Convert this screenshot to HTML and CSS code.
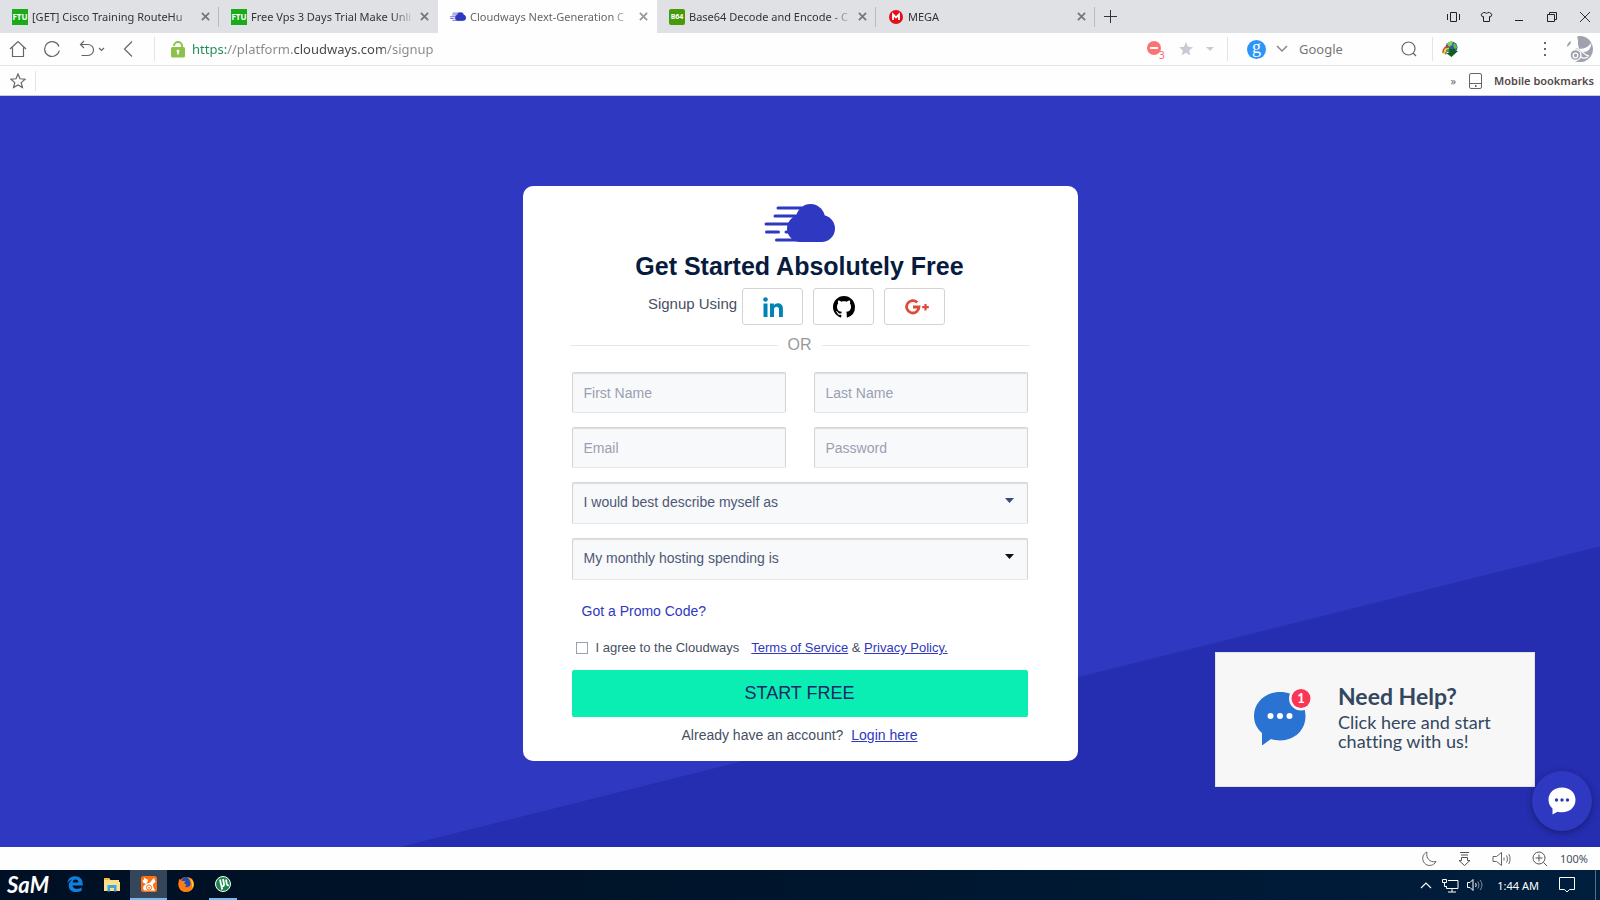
FILE: index.html
```html
<!DOCTYPE html>
<html lang="en">
<head>
    <meta charset="UTF-8">
    <meta name="viewport" content="width=device-width, initial-scale=1.0">
    <title>Cloudways Next-Generation Cloud</title>
    <link rel="stylesheet" href="styles.css">
</head>
<body>

    <svg width="0" height="0" class="defs" aria-hidden="true">
        <symbol id="cloud" viewBox="0 0 71 38">
            <g stroke="currentColor" stroke-width="3" stroke-linecap="round">
                <path d="M14 4h24M11 12h22M2 20h26M2.500 28h12M22 28h8M12.500 36h26"/>
            </g>
            <g fill="currentColor">
                <circle cx="46.500" cy="14.500" r="14.500"/>
                <circle cx="57.500" cy="24.500" r="13.500"/>
                <circle cx="36.500" cy="24.500" r="13.500"/>
                <path d="M36 20h22v18H36z"/>
            </g>
        </symbol>
        <symbol id="close" viewBox="0 0 10 10">
            <path d="M1 1l8 8M9 1l-8 8" stroke="currentColor" stroke-width="2"/>
        </symbol>
        <symbol id="down" viewBox="0 0 12 8">
            <path d="M1 1l5 5 5-5" fill="none" stroke="currentColor" stroke-width="1.500"/>
        </symbol>
    </svg>

    <header class="browser">
        <div class="tabs">
            <div class="tab">
                <span class="favicon ftu">FTU</span>
                <a href="#" class="tab-title">[GET] Cisco Training RouteHu</a>
                <button class="tab-close" aria-label="Close tab"><svg width="9" height="9"><use href="#close"/></svg></button>
            </div>
            <div class="tab">
                <span class="favicon ftu">FTU</span>
                <a href="#" class="tab-title">Free Vps 3 Days Trial Make Unli</a>
                <button class="tab-close" aria-label="Close tab"><svg width="9" height="9"><use href="#close"/></svg></button>
            </div>
            <div class="tab active">
                <svg class="favicon blue" width="16" height="9"><use href="#cloud"/></svg>
                <a href="#" class="tab-title">Cloudways Next-Generation C</a>
                <button class="tab-close" aria-label="Close tab"><svg width="9" height="9"><use href="#close"/></svg></button>
            </div>
            <div class="tab">
                <span class="favicon b64">B64</span>
                <a href="#" class="tab-title">Base64 Decode and Encode - C</a>
                <button class="tab-close" aria-label="Close tab"><svg width="9" height="9"><use href="#close"/></svg></button>
            </div>
            <div class="tab">
                <svg class="favicon" width="16" height="16" viewBox="0 0 16 16"><circle cx="8" cy="8" r="7" fill="#e80c18"/><path d="M5 11V5.500l3 3 3-3V11" fill="none" stroke="#fff" stroke-width="1.800"/></svg>
                <a href="#" class="tab-title">MEGA</a>
                <button class="tab-close" aria-label="Close tab"><svg width="9" height="9"><use href="#close"/></svg></button>
            </div>
            <button class="new-tab" aria-label="New tab"><svg width="13" height="13" viewBox="0 0 13 13"><path d="M6.500 0v13M0 6.500h13" stroke="#333"/></svg></button>
            <div class="window-controls">
                <button aria-label="Side panels"><svg width="13" height="12" viewBox="0 0 13 12"><path d="M.5 3v6M12.500 3v6M3.500 1.500h6v9h-6z" fill="none" stroke="#222"/></svg></button>
                <button aria-label="Themes"><svg width="13" height="12" viewBox="0 0 13 12"><path d="M3.500 1.500h1.500c1 1 2 1 3 0h1.500l2.500 2-1.500 2.500-1-.5v5h-6v-5l-1 .5L1 3.500z" fill="none" stroke="#222"/></svg></button>
                <button aria-label="Minimize"><svg width="12" height="12" viewBox="0 0 12 12"><path d="M2 9.500h8" stroke="#222"/></svg></button>
                <button aria-label="Restore"><svg width="12" height="12" viewBox="0 0 12 12"><path d="M1.500 3.500h7v7h-7zM3.500 3V1.500h7v7H9" fill="none" stroke="#222"/></svg></button>
                <button aria-label="Close window"><svg width="12" height="12" viewBox="0 0 12 12"><path d="M1 1l10 10M11 1L1 11" stroke="#333"/></svg></button>
            </div>
        </div>

        <div class="toolbar">
            <div class="nav">
                <button aria-label="Home"><svg width="18" height="18" viewBox="0 0 18 18"><path d="M1 9l8-7.500L17 9M3.500 7.500v9h11v-9" fill="none" stroke="#666" stroke-width="1.200"/></svg></button>
                <button aria-label="Reload"><svg width="18" height="18" viewBox="0 0 18 18"><path d="M16 6.500a7.400 7.400 0 1 0 .3 4" fill="none" stroke="#666" stroke-width="1.200"/></svg></button>
                <button class="undo" aria-label="Restore closed tab"><svg width="26" height="18" viewBox="0 0 26 18"><path d="M5 1L1.500 4.500 5 8M1.500 4.500H9a5.500 5.500 0 0 1 0 11H2.500" fill="none" stroke="#666" stroke-width="1.200"/><path d="M20 8l2.500 2.500L25 8" fill="none" stroke="#666" stroke-width="1.200"/></svg></button>
                <button aria-label="Back"><svg width="18" height="18" viewBox="0 0 18 18"><path d="M13 1.500L5.500 9l7.500 7.500" fill="none" stroke="#666" stroke-width="1.200"/></svg></button>
            </div>
            <div class="address">
                <svg width="14" height="17" viewBox="0 0 14 17"><path d="M3 5a4 4 0 0 1 8 0v2" fill="none" stroke="#8bc34a" stroke-width="2"/><rect y="6" width="14" height="10.500" rx="1.500" fill="#8bc34a"/><path d="M7 9.500v4" stroke="#fff" stroke-width="1.600"/><circle cx="7" cy="10" r="1.500" fill="#fff"/></svg>
                <input class="url" type="text" aria-label="Address" value="https://platform.cloudways.com/signup">
                <button aria-label="Blocked ads"><svg width="20" height="20" viewBox="0 0 20 20"><circle cx="8" cy="9" r="7" fill="#fb7373"/><path d="M4 9h8" stroke="#fff" stroke-width="2"/><text x="13" y="20" font-size="10" fill="#fb6a6a">3</text></svg></button>
                <button aria-label="Bookmark page"><svg width="14" height="14" viewBox="0 0 14 14"><path d="M7 0l2 4.800 5 .4-3.800 3.300L11.400 13.500 7 10.800 2.600 13.500l1.200-5L0 5.200l5-.4z" fill="#c8cad6"/></svg></button>
                <button aria-label="Bookmark options"><svg width="8" height="4" viewBox="0 0 8 4"><path d="M0 0h8L4 4z" fill="#c8cad6"/></svg></button>
            </div>
            <div class="search">
                <span class="engine">g</span>
                <svg class="grey" width="12" height="8"><use href="#down"/></svg>
                <input type="text" placeholder="Google" aria-label="Search">
                <button aria-label="Search"><svg width="16" height="16" viewBox="0 0 16 16"><circle cx="7.500" cy="7.500" r="6.500" fill="none" stroke="#666" stroke-width="1.200"/><path d="M12 12l3 3" stroke="#666" stroke-width="1.200"/></svg></button>
            </div>
            <div class="extras">
                <svg width="16" height="16" viewBox="0 0 16 16"><circle cx="9.500" cy="6.500" r="6" fill="#1e62a8"/><path d="M5 3c1-2 4-3 6-2l-1 3-3 2z" fill="#8ccf48"/><path d="M12 2c2 1 3 3 3 5l-2 1-2-3z" fill="#6fb83b"/><path d="M1 12C1 7 4 5 7 6" fill="none" stroke="#e33b20" stroke-width="1.500"/><path d="M2 13c0-4 3-6 5-5.500" fill="none" stroke="#f6cf2c" stroke-width="1.500"/><path d="M3.500 13.500c0-3 2-4 4-4" fill="none" stroke="#51a832" stroke-width="1.500"/><path d="M7 8l6 0 0 2h3l-6.500 6L4 12h4z" fill="#135c1c"/></svg>
                <button class="menu" aria-label="Menu"><svg width="4" height="16" viewBox="0 0 4 16"><path d="M1 1h2v2H1zM1 7h2v2H1zM1 13h2v2H1z" fill="#666"/></svg></button>
                <svg class="profile" width="26" height="26" viewBox="0 0 26 26">
                    <path d="M10 .5C18-2 26 5 26 13a13 13 0 0 1-23 8.500C3 15 7 13 12 11.500 10 8 12 5 10 .5zM0 11C0 8 1.500 6 4 5c0 2.500-1 4-4 6z" fill="#9fa2ae"/>
                    <path d="M10 12.500C15 13 20 13 24.500 6.500 24 13 21 16 16.500 16zM8 4c1 4 3 5 4 9l-3-1c1-3-1-4-1-8z" fill="#fefefe"/>
                    <circle cx="8.500" cy="19" r="5.500" fill="#9fa2ae" stroke="#fefefe" stroke-width="1.300"/>
                    <circle cx="8.500" cy="19.500" r="2.300" fill="none" stroke="#fefefe" stroke-width="1.300"/>
                    <path d="M13 14.500c4 1.500 4 5 9 5.500M14 21c2 2 5 1 7 0" fill="none" stroke="#fefefe" stroke-width="1.300"/>
                </svg>
            </div>
        </div>

        <div class="bookmarks">
            <button class="add" aria-label="Add bookmark"><svg width="16" height="16" viewBox="0 0 16 16"><path d="M8 1l2 4.800 5.200.4-4 3.400 1.200 5L8 12l-4.400 2.600 1.200-5-4-3.400L6 5.800z" fill="none" stroke="#666" stroke-width="1.200"/></svg></button>
            <span class="more">»</span>
            <svg width="13" height="16" viewBox="0 0 13 16"><rect x=".5" y=".5" width="12" height="15" rx="1.500" fill="none" stroke="#666"/><path d="M1 10.500h11" stroke="#666"/><path d="M6 12h1.500v2H6z" fill="#666"/></svg>
            <a href="#">Mobile bookmarks</a>
        </div>
    </header>

    <main class="page">
        <form class="card" onsubmit="return false;">
            <svg class="logo" width="71" height="38"><use href="#cloud"/></svg>
            <h1>Get Started Absolutely Free</h1>

            <div class="social">
                <span>Signup Using</span>
                <button type="button" aria-label="LinkedIn"><svg width="20" height="20" viewBox="0 0 20 20" fill="#0084b8"><circle cx="2.500" cy="2.500" r="2.300"/><path d="M.5 6.500h4V20h-4zM7 6.500h3.900v1.900c1.800-3.300 9-3 9 3V20H16v-7.500c0-3.800-5-3.500-5 0V20H7z"/></svg></button>
                <button type="button" aria-label="GitHub"><svg width="22" height="22" viewBox="0 0 16 16"><path d="M8 0C3.580 0 0 3.580 0 8c0 3.540 2.290 6.530 5.470 7.590.4.070.55-.17.55-.38 0-.19-.01-.82-.01-1.490-2.010.37-2.530-.49-2.690-.94-.09-.23-.48-.94-.82-1.130-.28-.15-.68-.52-.01-.53.63-.01 1.080.58 1.230.82.72 1.210 1.870.87 2.330.66.07-.52.28-.87.51-1.070-1.780-.2-3.640-.89-3.640-3.950 0-.87.31-1.590.82-2.150-.08-.2-.36-1.020.08-2.120 0 0 .67-.21 2.200.82.64-.18 1.320-.27 2-.27s1.360.09 2 .27c1.530-1.040 2.200-.82 2.200-.82.44 1.100.16 1.920.08 2.120.51.56.82 1.270.82 2.150 0 3.070-1.870 3.750-3.650 3.950.29.25.54.73.54 1.480 0 1.070-.01 1.930-.01 2.200 0 .21.15.46.55.38A8.010 8.010 0 0 0 16 8c0-4.420-3.580-8-8-8z"/></svg></button>
                <button type="button" aria-label="Google Plus"><svg class="gplus" width="24" height="16" viewBox="0 0 24 16" fill="none" stroke="#dd4b39"><path d="M12.200 3.400A6.200 6.200 0 1 0 14 8H8" stroke-width="2.800"/><path d="M20.500 5v6.500M17.200 8.200h6.600" stroke-width="2.200"/></svg></button>
            </div>

            <div class="divider">OR</div>

            <div class="fields">
                <input type="text" placeholder="First Name" aria-label="First Name">
                <input type="text" placeholder="Last Name" aria-label="Last Name">
                <input type="email" placeholder="Email" aria-label="Email">
                <input type="password" placeholder="Password" aria-label="Password">
                <div class="select">
                    <select aria-label="I would best describe myself as"><option>I would best describe myself as</option></select>
                    <svg width="9" height="5" viewBox="0 0 9 5"><path d="M0 0h9L4.500 5z" fill="#3b4a78"/></svg>
                </div>
                <div class="select">
                    <select aria-label="My monthly hosting spending is"><option>My monthly hosting spending is</option></select>
                    <svg width="9" height="5" viewBox="0 0 9 5"><path d="M0 0h9L4.500 5z" fill="#111"/></svg>
                </div>
            </div>

            <a href="#" class="promo">Got a Promo Code?</a>

            <div class="agree">
                <input type="checkbox" id="agree">
                <label for="agree">I agree to the Cloudways</label>
                <span><a href="#">Terms of Service</a> &amp; <a href="#">Privacy Policy.</a></span>
            </div>

            <button type="submit" class="start">START FREE</button>

            <p class="login">Already have an account? <a href="#">Login here</a></p>
        </form>

        <a href="#" class="help">
            <svg width="60" height="60" viewBox="0 0 60 60">
                <path d="M27 7C12 7 1 18 1 31c0 7 3 12.500 8 17v12.500l9-6.500c3 1 6 1.400 9 1.400 15 0 25.500-10.500 25.500-24.400S42 7 27 7z" fill="#2b73d2"/>
                <circle cx="17.500" cy="31" r="3" fill="#fff"/><circle cx="27" cy="31" r="3" fill="#fff"/><circle cx="36.500" cy="31" r="3" fill="#fff"/>
                <circle cx="48" cy="13.500" r="12" fill="#f7f7f7"/><circle cx="48" cy="13.500" r="9.500" fill="#fb3556"/>
                <text x="48" y="18" text-anchor="middle" font-size="13" font-weight="700" fill="#fff">1</text>
            </svg>
            <span class="help-text"><strong>Need Help?</strong>Click here and start chatting with us!</span>
        </a>
        <button class="chat" aria-label="Open chat">
            <svg width="28" height="28" viewBox="0 0 28 28"><path d="M14 .5C6 .5 .5 6 .5 12.500c0 4 1.500 7 4 9v6l5-2.800c1.500.5 3 .6 4.500.6 8 0 13.500-5.500 13.500-12.500S22 .5 14 .5z" fill="#fff"/><g fill="#2e38c0"><circle cx="8.500" cy="13" r="1.700"/><circle cx="14" cy="13" r="1.700"/><circle cx="19.500" cy="13" r="1.700"/></g></svg>
        </button>
    </main>

    <footer class="statusbar">
        <button aria-label="Night mode"><svg width="15" height="15" viewBox="0 0 15 15"><path d="M5 1a7 7 0 1 0 9 9.500C8 12 3.500 7 5 1z" fill="none" stroke="#666"/></svg></button>
        <button aria-label="Downloads"><svg width="13" height="14" viewBox="0 0 13 14"><path d="M2 .5h9M3 3h7M3.500 5.500h6v3H12l-5.500 5L1 8.500h2.500z" fill="none" stroke="#555"/></svg></button>
        <button aria-label="Sound"><svg width="19" height="14" viewBox="0 0 19 14"><path d="M1 4.500h3.500l5-4v13l-5-4H1zM12 5.500v3M14.500 3.500c1.200 2 1.200 5 0 7M16.800 2c1.700 3 1.700 7 0 10" fill="none" stroke="#666"/></svg></button>
        <button aria-label="Zoom"><svg width="16" height="16" viewBox="0 0 16 16"><circle cx="7" cy="7" r="6" fill="none" stroke="#555"/><path d="M3.500 7h7M7 3.500v7M11.500 11.500L15 15" stroke="#555"/></svg></button>
        <span>100%</span>
    </footer>

    <nav class="taskbar">
        <button class="sam">SaM</button>
        <button class="app" aria-label="Edge"><svg width="16" height="16" viewBox="0 0 16 16"><path d="M.3 7.200C1 2.800 4 .2 8.200.2c4.800 0 7.500 3.300 7.500 7.600v1.600H5.500c.2 2.300 2.200 3.400 4.500 3.400 1.700 0 3.300-.5 4.600-1.300v3.300c-1.500.8-3.300 1.200-5.200 1.200-4.700 0-7.700-2.500-7.700-6.600 0-2.700 1.500-4.900 4-6C3.300 3.900 1.500 5.200.3 7.200zM5.600 6.600h5.800c0-2-1-3.100-2.700-3.100-1.800 0-2.900 1.300-3.100 3.100z" fill="#0f80e0"/></svg></button>
        <button class="app" aria-label="File Explorer"><svg width="16" height="15" viewBox="0 0 16 15"><path d="M0 1h5l1.500 2H15v2h1v9H0z" fill="#ffe08a"/><path d="M0 1h5l1 2H0z" fill="#f3b93f"/><path d="M3.500 8h9v6.500H10V11H6v3.500H3.500z" fill="#3ba8e2"/></svg></button>
        <button class="app current" aria-label="UC Browser"><svg width="16" height="16" viewBox="0 0 16 16"><rect width="16" height="16" rx="2.500" fill="#fa7015"/><path d="M3 1.500l2 1.500c2 0 2.500 1.500 1.500 3L5 7.500c2 0 4-.5 5-2C10.500 4 12 2.500 13.500 2c-.5 1.500.5 2.500 1 3.500-.5 1.500-2 1.500-2.500 3 0 3 1 4 2.500 6H4c-2-.5-2.500-3-1-5L5 8 2 6.500 1.500 4.500 3 3.500z" fill="#fff"/><circle cx="8" cy="11.500" r="2.600" fill="none" stroke="#fa7015"/><circle cx="8" cy="11.800" r=".9" fill="#fa7015"/></svg></button>
        <button class="app" aria-label="Firefox"><svg width="16" height="16" viewBox="0 0 16 16"><circle cx="8" cy="8.500" r="7.500" fill="#f2501e"/><circle cx="8.500" cy="6" r="5" fill="#1b4fb8"/><path d="M1 3l3 2h3.500L6 7l2.500 2-1.500 2c3 1.500 5.500 0 5.500-3.500C12.500 5 11 3 9.500 1.500 14 1 16 5 16 8.500c0 4.500-3.500 7.500-8 7.500C3 16 0 12 .5 7.500z" fill="#fb7d16"/><path d="M12 2c4 3 4.500 8 1.500 11 1-3 .5-7-1.500-11z" fill="#ffcf2e"/></svg></button>
        <button class="app running" aria-label="uTorrent"><svg width="16" height="16" viewBox="0 0 16 16"><circle cx="8" cy="8" r="7.500" fill="#17854a" stroke="#fff"/><path d="M5 3.500l1 5c.5 2.500 3.500 2 3-.5l-1-5M11 3.500l.8 4.500c.3 1 1 1.500 2 1.200M6.300 9l.9 4.500" fill="none" stroke="#fff" stroke-width="1.800"/></svg></button>
        <div class="tray">
            <svg width="12" height="8" viewBox="0 0 12 8"><path d="M1 7l5-5 5 5" fill="none" stroke="#fff" stroke-width="1.200"/></svg>
            <svg class="network" width="17" height="15" viewBox="0 0 17 15"><path d="M6 2.500h10v8H4.500V8M10 11v3M6 14h8M.5 1.500h4v3h-4zM2.500 5v3.500h2" fill="none" stroke="#fff"/></svg>
            <svg class="volume" width="16" height="14" viewBox="0 0 16 14"><path d="M.5 4.500H3l3-3v11l-3-3H.5zM8.500 5c.8 1 .8 3 0 4" fill="none" stroke="#fff"/><path d="M10.700 3.500c1.600 2 1.600 5 0 7M13 2c2.500 3 2.500 7 0 10" fill="none" stroke="#8995a5"/></svg>
            <span class="clock">1:44 AM</span>
            <svg width="16" height="16" viewBox="0 0 16 16"><path d="M.5.500h15v12h-5L8 15l-2.500-2.500h-5z" fill="none" stroke="#fff"/></svg>
        </div>
    </nav>

</body>
</html>
```
FILE: styles.css
```css
* {
    box-sizing: border-box;
}

body {
    display: flex;
    flex-direction: column;
    min-height: 100vh;
    margin: 0;
    font-family: "Liberation Sans", Arial, sans-serif;
    font-size: 14px;
    color: #46505f;
}

button {
    padding: 0;
    border: none;
    background: none;
    font-family: inherit;
    cursor: pointer;
}

input,
select {
    font-family: inherit;
}

svg {
    display: block;
    flex-shrink: 0;
}

.defs {
    position: absolute;
}

/* Browser window */
.browser,
.statusbar,
.taskbar {
    font-family: "Noto Sans", "Open Sans", sans-serif;
    font-size: 11px;
}

.browser {
    background: #fefefe;
    border-bottom: 1px solid #ccc;
}

.browser button,
.statusbar button {
    display: flex;
    align-items: center;
    justify-content: center;
}

/* Tabs */
.tabs {
    display: flex;
    align-items: center;
    height: 33px;
    background: #e0e1e5;
}

.tab {
    display: flex;
    align-items: center;
    flex: 0 1 219px;
    min-width: 0;
    height: 33px;
    padding: 0 5px 0 12px;
    background: linear-gradient(#bbb, #bbb) right / 1px 20px no-repeat;
}

.tab:has(+ .active) {
    background: none;
}

.tab.active {
    background: #fefefe;
}

.favicon {
    flex-shrink: 0;
    width: 16px;
    margin-right: 4px;
    color: #fff;
    font: 700 8px/16px "Noto Sans", sans-serif;
    text-align: center;
}

.ftu {
    background: #1aab1a;
}

.b64 {
    border-radius: 2px;
    background: #479b0b;
    font-size: 7px;
}

.blue {
    color: #2e38c0;
}

.tab-title {
    flex: 1;
    overflow: hidden;
    color: #333;
    text-decoration: none;
    white-space: nowrap;
    mask-image: linear-gradient(to right, #000 86%, transparent);
}

.active .tab-title {
    color: #666;
}

.tab-close {
    width: 18px;
    height: 18px;
    color: #777;
}

.active .tab-close {
    color: #999;
}

.new-tab {
    width: 30px;
    height: 30px;
}

.window-controls {
    display: flex;
    gap: 13px;
    margin-left: auto;
    padding-right: 5px;
}

.window-controls button {
    width: 20px;
    height: 20px;
}

/* Toolbar */
.toolbar {
    display: flex;
    align-items: center;
    height: 33px;
    border-bottom: 1px solid #e4e4e4;
}

.nav,
.address,
.search,
.extras {
    display: flex;
    align-items: center;
    height: 24px;
}

.nav {
    gap: 16px;
    width: 155px;
    padding-left: 9px;
    border-right: 1px solid #e4e4e4;
}

.nav .undo {
    margin: 0 -2px 0 2px;
}

.address {
    flex: 1;
    gap: 13px;
    padding: 0 13px 0 16px;
    border-right: 1px solid #e4e4e4;
}

.address input,
.search input {
    min-width: 0;
    padding: 0;
    border: none;
    outline: none;
    background: none;
    font-size: 13px;
}

.address .url {
    flex: 1;
    margin-left: -6px;
    color: transparent;
    background: linear-gradient(to right, #1d8a5b 36px, #888 36px, #888 101px, #444 101px, #444 193px, #888 193px);
    -webkit-background-clip: text;
    background-clip: text;
}

.search {
    width: 205px;
    padding: 0 15px 0 19px;
    border-right: 1px solid #e4e4e4;
}

.search .engine {
    width: 19px;
    height: 19px;
    margin-right: 10px;
    border-radius: 50%;
    background: #2b95fb;
    color: #fff;
    font: 18px/14px "Liberation Serif", serif;
    text-align: center;
}

.grey {
    color: #888;
}

.search input {
    flex: 1;
    margin-left: 11px;
}

.search input::placeholder {
    color: #777;
}

.extras {
    padding: 0 7px 0 9px;
}

.extras .menu {
    margin: 0 20px 0 85px;
}

/* Bookmarks bar */
.bookmarks {
    display: flex;
    align-items: center;
    height: 29px;
    padding-right: 6px;
}

.bookmarks .add {
    width: 36px;
    height: 20px;
    border-right: 1px solid #e4e4e4;
}

.bookmarks .more {
    margin: 0 13px 0 auto;
    color: #666;
}

.bookmarks a {
    margin-left: 12px;
    color: #544848;
    font-weight: 600;
    text-decoration: none;
}

/* Signup page */
.page {
    position: relative;
    flex: 1;
    padding: 90px 0 86px;
    background: #2e38c0;
}

.page::before {
    content: "";
    position: absolute;
    inset: 0;
    background: #252db0;
    clip-path: polygon(100% 60%, 100% 100%, 25% 100%);
}

.card {
    position: relative;
    width: 100%;
    max-width: 555px;
    margin: 0 auto;
    padding: 18px 50px 17px 49px;
    border-radius: 10px;
    background: #fff;
}

.card a {
    color: #2e38c0;
}

.logo {
    margin: 0 auto;
    color: #2e38c0;
}

.card h1 {
    margin: 8px 0 6px;
    color: #071b3e;
    font-size: 25px;
    line-height: 32px;
    text-align: center;
}

.social {
    display: flex;
    justify-content: center;
    gap: 10px;
    padding-right: 6px;
    font-size: 15px;
    line-height: 32px;
}

.social span {
    margin-right: -5px;
}

.social button {
    display: flex;
    align-items: center;
    justify-content: center;
    width: 61px;
    height: 37px;
    border: 1px solid #d3d3d3;
    border-radius: 3px;
}

.gplus {
    margin-left: 4px;
}

.divider {
    display: flex;
    align-items: center;
    gap: 10px;
    margin: 10px -2px 17px;
    color: #999;
    font-size: 16px;
    line-height: 20px;
}

.divider::before,
.divider::after {
    content: "";
    flex: 1;
    height: 1px;
    background: #e8e8e8;
}

.fields {
    display: grid;
    grid-template-columns: 1fr 1fr;
    gap: 14px 28px;
}

.fields input,
.fields select {
    width: 100%;
    height: 41px;
    padding: 0 11px;
    border: 1px solid #d6d6d6;
    border-bottom-color: #e6e6e6;
    border-radius: 2px;
    background: #f8f9fb;
    box-shadow: inset 0 1px 1px #ddd;
    color: #4d5875;
    font-size: 14px;
}

.fields input::placeholder {
    color: #9a9fb1;
}

.select {
    position: relative;
    grid-column: span 2;
}

.fields select {
    display: block;
    height: 42px;
    padding-bottom: 3px;
    appearance: none;
}

.select svg {
    position: absolute;
    top: 16px;
    right: 14px;
    pointer-events: none;
}

.promo {
    display: block;
    width: max-content;
    margin: 22px 10px 20px;
    line-height: 18px;
    text-decoration: none;
}

.agree {
    display: flex;
    align-items: center;
    padding-left: 4px;
    font-size: 13px;
    line-height: 16px;
}

.agree input {
    width: 12px;
    height: 12px;
    margin: 0 8px 0 0;
    border: 1px solid #99a0b0;
    background: #fff;
    appearance: none;
}

.agree input:checked {
    background: #2e38c0;
}

.agree label {
    margin-right: 12px;
}

.start {
    display: block;
    width: 100%;
    height: 47px;
    margin-top: 14px;
    border-radius: 2px;
    background: #0aeeb3;
    color: #1a2766;
    font-size: 18px;
}

.login {
    margin: 9px 0 0;
    line-height: 18px;
    text-align: center;
}

.login a {
    margin-left: 4px;
}

/* Live chat */
.help {
    position: absolute;
    right: 65px;
    bottom: 60px;
    display: flex;
    align-items: center;
    gap: 25px;
    width: 320px;
    height: 135px;
    padding: 0 31px 10px 37px;
    border: 1px solid #e3e3e3;
    background: #f7f7f7;
    color: #33475f;
    font: 18px/19px Lato, sans-serif;
    font-variant-ligatures: none;
    text-decoration: none;
}

.help strong {
    display: block;
    font-size: 23px;
    line-height: 34px;
}

.chat {
    position: absolute;
    right: 8px;
    bottom: 16px;
    display: flex;
    align-items: center;
    justify-content: center;
    width: 60px;
    height: 60px;
    border-radius: 50%;
    background: #2e38c0;
    box-shadow: 0 2px 6px rgba(0, 0, 0, 0.35);
}

/* Status bar */
.statusbar {
    display: flex;
    align-items: center;
    justify-content: flex-end;
    gap: 21px;
    height: 23px;
    padding-right: 12px;
    background: #fefefe;
}

.statusbar span {
    margin-left: -9px;
}

/* Windows taskbar */
.taskbar {
    display: flex;
    align-items: center;
    height: 30px;
    background: linear-gradient(to right, #001024, #00142a 40%, #001e3d);
}

.sam {
    width: 56px;
    color: #fff;
    font: italic 700 22px/30px Lato, sans-serif;
}

.app {
    display: flex;
    align-items: center;
    justify-content: center;
    width: 37px;
    height: 30px;
    border-bottom: 2px solid transparent;
}

.app.current {
    border-color: #76b9ed;
    background: #35465a;
}

.app.running {
    width: 28px;
    margin-left: 5px;
    border-color: #76b9ed;
}

.tray {
    display: flex;
    align-items: center;
    height: 30px;
    margin: 0 4px 0 auto;
    padding-right: 20px;
    border-right: 1px solid #5b6b80;
    color: #fff;
}

.network {
    margin: 0 8px 0 10px;
}

.clock {
    margin: 0 20px 0 14px;
}
```
